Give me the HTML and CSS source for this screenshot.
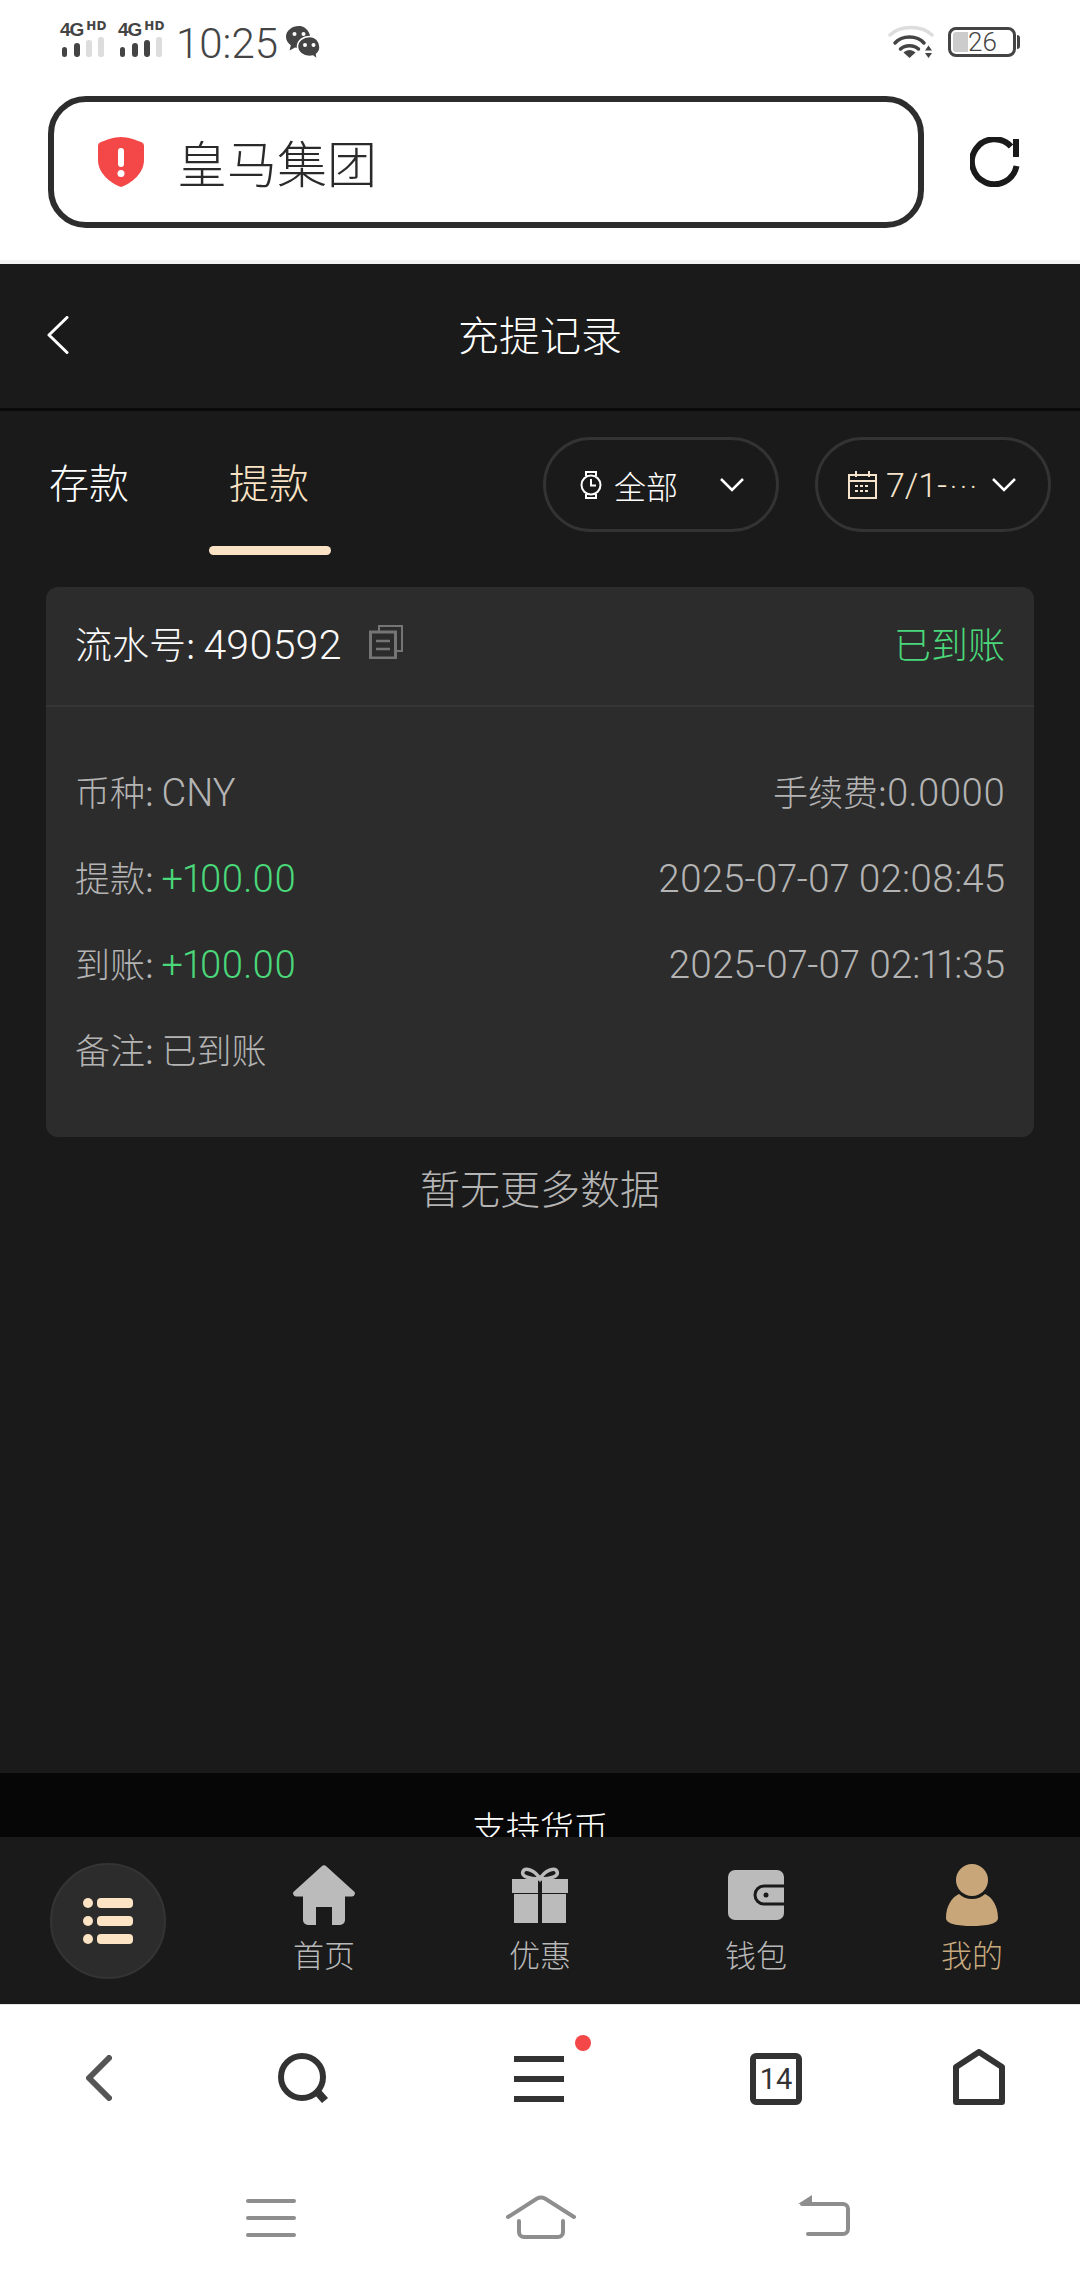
FILE: index.html
```html
<!DOCTYPE html>
<html lang="zh-CN">

<head>
    <meta charset="UTF-8">
    <title>充提记录</title>
    <link rel="stylesheet" href="styles.css">
</head>

<body>
    <div class="status-bar">
        <div class="signal">
            <div class="signal-label"><span class="net">4G</span><span class="hd">HD</span></div>
            <svg width="46" height="20" viewBox="0 0 46 20">
                <rect x="2" y="10" width="5" height="10" rx="2.500" fill="#444" />
                <rect x="14" y="6" width="6" height="14" rx="3" fill="#444" />
                <rect x="26" y="3" width="6" height="17" rx="2.500" fill="#ddd" />
                <rect x="38" y="0" width="6" height="20" rx="2.500" fill="#ddd" />
            </svg>
        </div>
        <div class="signal">
            <div class="signal-label"><span class="net">4G</span><span class="hd">HD</span></div>
            <svg width="46" height="20" viewBox="0 0 46 20">
                <rect x="2" y="10" width="5" height="10" rx="2.500" fill="#444" />
                <rect x="14" y="6" width="6" height="14" rx="3" fill="#444" />
                <rect x="26" y="3" width="6" height="17" rx="3" fill="#444" />
                <rect x="38" y="0" width="6" height="20" rx="2.500" fill="#ddd" />
            </svg>
        </div>
        <span class="clock">10:25</span>
        <svg class="wechat" width="34" height="34" viewBox="0 0 34 34">
            <path d="M13 0C5.800 0 0 4.800 0 10.800c0 3.400 1.900 6.400 4.800 8.400L3.600 24.500l5.400-3.100c1.300.3 2.700.5 4 .5 5 0 9-3 11-7C26 11 22 0 13 0z" fill="#444" />
            <circle cx="8.500" cy="8" r="2" fill="#fff" />
            <circle cx="17.500" cy="8" r="2" fill="#fff" />
            <path d="M23.500 10.500C17 10.500 11.500 15 11.500 20.500S17 30.500 23.500 30.500c1.300 0 2.400-.2 3.500-.5l4.500 3.500-1-5.200c2.200-1.800 3.500-4.400 3.500-7.300 0-5.500-4-10.500-10.500-10.500z" fill="#444" stroke="#fff" stroke-width="1.500" />
            <circle cx="19" cy="19" r="2" fill="#fff" />
            <circle cx="27.500" cy="19" r="2" fill="#fff" />
        </svg>
        <div class="status-right">
            <svg width="46" height="33" viewBox="0 0 46 33">
                <path d="M2 10C12 0 34 0 44 10" fill="none" stroke="#ddd" stroke-width="3.500" stroke-linecap="round" />
                <path d="M7 18C14 10 29 10 36 18" fill="none" stroke="#444" stroke-width="3.500" stroke-linecap="round" />
                <path d="M12.500 24C17 19.500 26 19.500 30.500 24" fill="none" stroke="#444" stroke-width="3.500" stroke-linecap="round" />
                <path d="M15.500 27.500C19 24 24 24 27.500 27.500L21.500 33z" fill="#444" />
                <path d="M40.500 20.500l3.500 5h-7zM37 28h7l-3.500 5z" fill="#444" />
            </svg>
            <div class="battery">
                <div class="battery-body"><span class="battery-fill"></span><span class="battery-num">26</span></div>
                <span class="battery-nub"></span>
            </div>
        </div>
    </div>

    <div class="address-row">
        <div class="address-box">
            <svg width="46" height="50" viewBox="0 0 46 50">
                <path d="M23 0C30 0 38 3 43 5c2 .8 3 2 3 4v14c0 13-12 23-23 27C12 46 0 36 0 23V9c0-2 1-3.200 3-4C8 3 16 0 23 0z" fill="#f44848" />
                <rect x="20" y="11" width="6" height="19" rx="3" fill="#fff" />
                <circle cx="23" cy="36.500" r="3.500" fill="#fff" />
            </svg>
            <span class="address-text">皇马集团</span>
        </div>
        <svg class="reload" width="50" height="50" viewBox="0 0 50 50">
            <path d="M41 9.500A22.500 22.500 0 1 0 46.500 29" fill="none" stroke="#1a1a1a" stroke-width="6" />
            <path d="M43 2h6v18h-6z" fill="#1a1a1a" />
        </svg>
    </div>

    <div class="page-header">
        <svg class="back" width="22" height="38" viewBox="0 0 22 38">
            <path d="M20 1.500L2 19l18 17.500" fill="none" stroke="#fff" stroke-width="3" stroke-linecap="round" stroke-linejoin="round" />
        </svg>
        <h1 class="page-title">充提记录</h1>
    </div>

    <div class="content">
        <div class="tabs-row">
            <div class="tab"><span class="tab-text">存款</span></div>
            <div class="tab tab-active"><span class="tab-text">提款</span><span class="tab-line"></span></div>
            <div class="filters">
                <div class="pill">
                    <svg width="22" height="28" viewBox="0 0 22 28">
                        <path d="M6 5V1h10v4M6 23v4h10v-4" fill="none" stroke="#fff" stroke-width="2" />
                        <circle cx="11" cy="14" r="9.500" fill="none" stroke="#fff" stroke-width="2" />
                        <path d="M11 8v6.500h5" fill="none" stroke="#fff" stroke-width="2" />
                    </svg>
                    <span class="pill-text">全部</span>
                    <svg class="pill-arrow" width="24" height="14" viewBox="0 0 24 14">
                        <path d="M1 1l11 11L23 1" fill="none" stroke="#fff" stroke-width="2.500" />
                    </svg>
                </div>
                <div class="pill pill-date">
                    <svg width="29" height="28" viewBox="0 0 29 28">
                        <path d="M1 4h27v23H1zM1 10h27M8 0v6M21 0v6" fill="none" stroke="#f5e3cc" stroke-width="2" />
                        <path d="M7 15h15M7 20h15" fill="none" stroke="#f5e3cc" stroke-width="2" stroke-dasharray="3 2" />
                    </svg>
                    <span class="pill-text">7/1-<span class="dots">···</span></span>
                    <svg class="pill-arrow" width="24" height="14" viewBox="0 0 24 14">
                        <path d="M1 1l11 11L23 1" fill="none" stroke="#fff" stroke-width="2.500" />
                    </svg>
                </div>
            </div>
        </div>

        <div class="record-card">
            <div class="record-head">
                <span class="record-no">流水号: <span class="num">490592</span></span>
                <svg class="copy-icon" width="34" height="34" viewBox="0 0 34 34">
                    <path d="M10 6V1h23v25h-6" fill="none" stroke="#757575" stroke-width="2" />
                    <rect x="1.500" y="7" width="25" height="26" fill="none" stroke="#757575" stroke-width="3" />
                    <path d="M7 16h14M7 24h14" stroke="#757575" stroke-width="2.500" />
                </svg>
                <span class="record-state">已到账</span>
            </div>
            <div class="record-body">
                <div class="record-row"><span>币种: <span class="num">CNY</span></span><span>手续费:<span class="num">0.0000</span></span></div>
                <div class="record-row"><span>提款: <em class="num">+100.00</em></span><span><span class="num time">2025-07-07 02:08:45</span></span></div>
                <div class="record-row"><span>到账: <em class="num">+100.00</em></span><span><span class="num time">2025-07-07 02:11:35</span></span></div>
                <div class="record-row"><span>备注: 已到账</span></div>
            </div>
        </div>

        <div class="no-more">暂无更多数据</div>
    </div>

    <div class="footer-strip">支持货币</div>

    <div class="bottom-nav">
        <div class="nav-cell">
            <div class="menu-circle">
                <svg width="50" height="46" viewBox="0 0 50 46">
                    <circle cx="5" cy="5" r="5" fill="#fbe3c4" />
                    <circle cx="5" cy="23" r="5" fill="#fbe3c4" />
                    <circle cx="5" cy="41" r="5" fill="#fbe3c4" />
                    <rect x="14" y="0" width="36" height="10" rx="4" fill="#fbe3c4" />
                    <rect x="14" y="18" width="36" height="10" rx="4" fill="#fbe3c4" />
                    <rect x="14" y="36" width="36" height="10" rx="4" fill="#fbe3c4" />
                </svg>
            </div>
        </div>
        <div class="nav-cell">
            <div class="nav-icon">
                <svg width="62" height="60" viewBox="0 0 62 60">
                    <path d="M28.500 1.500a3.500 3.500 0 0 1 5 0L60.500 26a3 3 0 0 1-2 5.500H52V55a5 5 0 0 1-5 5H39V42H23v18h-8a5 5 0 0 1-5-5V31.500H3.500a3 3 0 0 1-2-5.500z" fill="#bbb" />
                </svg>
            </div>
            <span class="nav-label">首页</span>
        </div>
        <div class="nav-cell">
            <div class="nav-icon">
                <svg width="56" height="56" viewBox="0 0 56 56">
                    <path d="M28 12C23 3 13 0 11 4.500 9 9 16 12 28 12c12 0 19-3 17-7.500C43 0 33 3 28 12z" fill="none" stroke="#bbb" stroke-width="3.500" />
                    <path d="M0 12h26v14H0zM30 12h26v14H30zM2 27h24v29H2zM30 27h24v29H30z" fill="#bbb" />
                </svg>
            </div>
            <span class="nav-label">优惠</span>
        </div>
        <div class="nav-cell">
            <div class="nav-icon">
                <svg width="56" height="50" viewBox="0 0 56 50">
                    <rect width="56" height="50" rx="7" fill="#bbb" />
                    <path d="M56 16H36a9 9 0 0 0 0 18h20" fill="none" stroke="#1a1a1a" stroke-width="3" />
                    <circle cx="38" cy="25" r="2.500" fill="#1a1a1a" />
                </svg>
            </div>
            <span class="nav-label">钱包</span>
        </div>
        <div class="nav-cell">
            <div class="nav-icon">
                <svg width="52" height="62" viewBox="0 0 52 62">
                    <circle cx="26" cy="16" r="16" fill="#c9a67a" />
                    <path d="M13 30c3 3 8 5 13 5s10-2 13-5c7 3 13 12 13 24 0 6-12 8-26 8S0 60 0 54c0-12 6-21 13-24z" fill="#c9a67a" />
                </svg>
            </div>
            <span class="nav-label nav-label-active">我的</span>
        </div>
    </div>

    <div class="browser-bar">
        <svg class="tool-back" width="26" height="46" viewBox="0 0 26 46">
            <path d="M23 3L3 23l20 20" fill="none" stroke="#555" stroke-width="6" stroke-linecap="round" stroke-linejoin="round" />
        </svg>
        <svg class="tool-search" width="50" height="52" viewBox="0 0 50 52">
            <circle cx="24" cy="25" r="21" fill="none" stroke="#333" stroke-width="6" />
            <path d="M36 42l8 9 6-5-8-9z" fill="#333" />
        </svg>
        <div class="tool-menu">
            <span></span><span></span><span></span>
            <i class="red-dot"></i>
        </div>
        <div class="tool-tabs">14</div>
        <svg class="tool-home" width="52" height="56" viewBox="0 0 52 56">
            <path d="M26 3L49 18v35H3V18z" fill="none" stroke="#333" stroke-width="6" stroke-linejoin="round" />
        </svg>
    </div>

    <div class="system-bar">
        <div class="sys-menu"><span></span><span></span><span></span></div>
        <svg class="sys-home" width="70" height="44" viewBox="0 0 70 44">
            <path d="M2 22L31 3.500q4-2 8 0L68 22" fill="none" stroke="#8e8e8e" stroke-width="4" stroke-linecap="round" />
            <path d="M13 26v11a5 5 0 0 0 5 5h34a5 5 0 0 0 5-5V26" fill="none" stroke="#8e8e8e" stroke-width="4" stroke-linecap="round" />
        </svg>
        <svg class="sys-back" width="52" height="42" viewBox="0 0 52 42">
            <path d="M4 9h41a5 5 0 0 1 5 5v20a5 5 0 0 1-5 5H10" fill="none" stroke="#8e8e8e" stroke-width="4" stroke-linecap="round" />
            <path d="M0 9L14 0v9z" fill="#8e8e8e" />
        </svg>
    </div>
</body>

</html>
```

FILE: styles.css
```css
body {
    margin: 0;
    width: 1080px;
    height: 2280px;
    display: flex;
    flex-direction: column;
    overflow: hidden;
    background-color: #1a1a1a;
    font-family: "Noto Sans CJK SC", sans-serif;
    font-weight: 300;
}

svg {
    display: block;
    flex-shrink: 0;
}

.num {
    font-family: Roboto, sans-serif;
    font-weight: 300;
    font-variant-numeric: proportional-nums;
}

/* status bar */
.status-bar {
    height: 96px;
    box-sizing: border-box;
    padding: 22px 60px 0;
    display: flex;
    align-items: flex-start;
    background-color: #fff;
    color: #444;
}

.signal {
    width: 58px;
}

.signal-label {
    display: flex;
    height: 15px;
    line-height: 15px;
    font-family: "Liberation Sans", sans-serif;
    font-weight: bold;
}

.net {
    font-size: 19px;
    letter-spacing: -1px;
    margin-right: 3px;
}

.hd {
    font-family: "DejaVu Sans", sans-serif;
    font-size: 12px;
    line-height: 9px;
}

.clock {
    font-family: Roboto, sans-serif;
    font-size: 42px;
    line-height: 44px;
    font-weight: 300;
}

.wechat {
    margin-left: 8px;
    margin-top: 4px;
}

.status-right {
    margin-left: auto;
    display: flex;
    align-items: flex-start;
    gap: 14px;
    padding-top: 3px;
}

.battery {
    display: flex;
    align-items: center;
    margin-top: 2px;
}

.battery-body {
    width: 68px;
    height: 30px;
    box-sizing: border-box;
    border: 3px solid #444;
    border-radius: 8px;
    padding: 2px;
    display: flex;
}

.battery-fill {
    width: 15px;
    background-color: #ccc;
    border-radius: 3px 0 0 3px;
}

.battery-num {
    font-family: Roboto, sans-serif;
    font-size: 26px;
    line-height: 20px;
    font-weight: 300;
}

.battery-nub {
    width: 3px;
    height: 14px;
    margin-left: 1px;
    background-color: #444;
    border-radius: 0 3px 3px 0;
}

/* address row */
.address-row {
    height: 168px;
    box-sizing: border-box;
    padding: 0 60px 32px 48px;
    display: flex;
    align-items: center;
    background-color: #fff;
    border-bottom: 4px solid #f2f2f2;
}

.address-box {
    width: 876px;
    height: 132px;
    box-sizing: border-box;
    border: 6px solid #2d2d2d;
    border-radius: 38px;
    padding-left: 44px;
    display: flex;
    align-items: center;
    gap: 33px;
}

.address-text {
    margin-top: -2px;
    font-size: 50px;
    color: #2a2a2a;
}

.reload {
    margin-left: 46px;
}

/* page header */
.page-header {
    height: 147px;
    box-sizing: border-box;
    padding-left: 47px;
    display: flex;
    align-items: center;
    background-color: #1a1a1a;
    border-bottom: 3px solid #0a0a0a;
}

.back {
    margin-top: -3px;
}

.page-title {
    margin: -6px 0 0 389px;
    font-size: 41px;
    font-weight: 300;
    color: #fff;
}

/* tabs and filters */
.content {
    flex: 1;
}

.tabs-row {
    height: 144px;
    padding: 0 29px 0 29px;
    display: flex;
}

.tab {
    width: 122px;
    height: 144px;
    box-sizing: border-box;
    padding-top: 41px;
    margin-right: 58px;
    display: flex;
    flex-direction: column;
    align-items: center;
    font-size: 40px;
    line-height: 58px;
    color: #fff;
}

.tab-text {
    margin-right: 2px;
}

.tab-active {
    color: #fae3c5;
    margin-right: 0;
}

.tab-line {
    margin-top: auto;
    width: 122px;
    height: 9px;
    border-radius: 5px;
    background-color: #fae3c5;
}

.filters {
    margin-left: auto;
    padding-top: 26px;
    display: flex;
    gap: 36px;
}

.pill {
    width: 236px;
    height: 95px;
    box-sizing: border-box;
    border: 3px solid #333;
    border-radius: 48px;
    padding-left: 34px;
    display: flex;
    align-items: center;
    color: #fff;
}

.pill-text {
    margin-left: 12px;
    font-size: 32px;
    white-space: nowrap;
}

.pill-arrow {
    margin-left: auto;
    margin-right: 32px;
}

.pill-date {
    padding-left: 30px;
    color: #f5e3cc;
}

.pill-date .pill-text {
    margin-left: 9px;
    font-family: Roboto, sans-serif;
    font-size: 34px;
}

.dots {
    margin-left: 3px;
    font-size: 28px;
    letter-spacing: 3px;
}

/* record card */
.record-card {
    margin: 32px 46px 0;
    height: 550px;
    border-radius: 12px;
    background-color: #2c2c2c;
}

.record-head {
    height: 120px;
    box-sizing: border-box;
    padding: 0 29px 7px;
    display: flex;
    align-items: center;
    border-bottom: 2px solid #353535;
    font-size: 37px;
}

.record-no {
    color: #fafafa;
}

.record-no .num {
    font-size: 41px;
}

.copy-icon {
    margin: -1px 0 0 27px;
}

.record-state {
    margin-left: auto;
    color: #4ad87a;
}

.record-body {
    padding: 41px 29px 0;
}

.record-row {
    height: 86px;
    line-height: 86px;
    display: flex;
    justify-content: space-between;
    font-size: 35px;
    color: #b4b4b4;
}

.record-row .num {
    font-size: 38px;
}

.record-row .time {
    font-size: 38.500px;
}

.record-row em {
    font-style: normal;
    color: #4ad87a;
}

.no-more {
    height: 104px;
    line-height: 100px;
    text-align: center;
    font-size: 40px;
    color: #b4b4b4;
}

/* clipped strip behind the nav */
.footer-strip {
    height: 64px;
    overflow: hidden;
    box-sizing: border-box;
    padding-top: 30px;
    text-align: center;
    background-color: #060606;
    font-size: 34px;
    line-height: 48px;
    color: #fff;
}

/* bottom nav */
.bottom-nav {
    height: 167px;
    display: grid;
    grid-template-columns: repeat(5, 216px);
    background-color: #1a1a1a;
}

.nav-cell {
    display: flex;
    flex-direction: column;
    align-items: center;
}

.menu-circle {
    margin-top: 26px;
    width: 116px;
    height: 116px;
    box-sizing: border-box;
    border: 2px solid #343434;
    border-radius: 50%;
    background-color: #2c2c2c;
    display: flex;
    align-items: center;
    justify-content: center;
}

.nav-icon {
    margin-top: 28px;
    height: 60px;
    display: flex;
    align-items: center;
}

.nav-label {
    margin-top: 9px;
    font-size: 31px;
    line-height: 40px;
    color: #b8b8b8;
}

.nav-label-active {
    color: #c6a97f;
}

/* browser toolbar */
.browser-bar {
    height: 174px;
    box-sizing: border-box;
    padding-left: 86px;
    padding-top: 44px;
    display: flex;
    align-items: flex-start;
    background-color: #fff;
    border-top: 1px solid #e5e5e5;
}

.tool-back {
    margin-top: 6px;
}

.tool-search {
    margin-left: 166px;
    margin-top: 3px;
}

.tool-menu {
    position: relative;
    margin-left: 186px;
    margin-top: 7px;
    width: 50px;
    display: flex;
    flex-direction: column;
    gap: 14px;
}

.tool-menu span {
    height: 6px;
    background-color: #333;
}

.red-dot {
    position: absolute;
    left: 61px;
    top: -21px;
    width: 16px;
    height: 16px;
    border-radius: 50%;
    background-color: #f44848;
}

.tool-tabs {
    margin-left: 186px;
    margin-top: 4px;
    width: 52px;
    height: 52px;
    box-sizing: border-box;
    border: 6px solid #333;
    border-radius: 6px;
    text-align: center;
    font-family: Roboto, sans-serif;
    font-size: 29px;
    font-weight: 400;
    line-height: 40px;
    color: #333;
}

.tool-home {
    margin-left: 151px;
}

/* system nav */
.system-bar {
    height: 102px;
    box-sizing: border-box;
    padding-left: 246px;
    padding-top: 17px;
    display: flex;
    align-items: flex-start;
    background-color: #fff;
}

.sys-menu {
    margin-top: 4px;
    width: 50px;
    display: flex;
    flex-direction: column;
    gap: 13px;
}

.sys-menu span {
    height: 4px;
    border-radius: 2px;
    background-color: #8e8e8e;
}

.sys-home {
    margin-left: 210px;
}

.sys-back {
    margin-left: 222px;
}
```
